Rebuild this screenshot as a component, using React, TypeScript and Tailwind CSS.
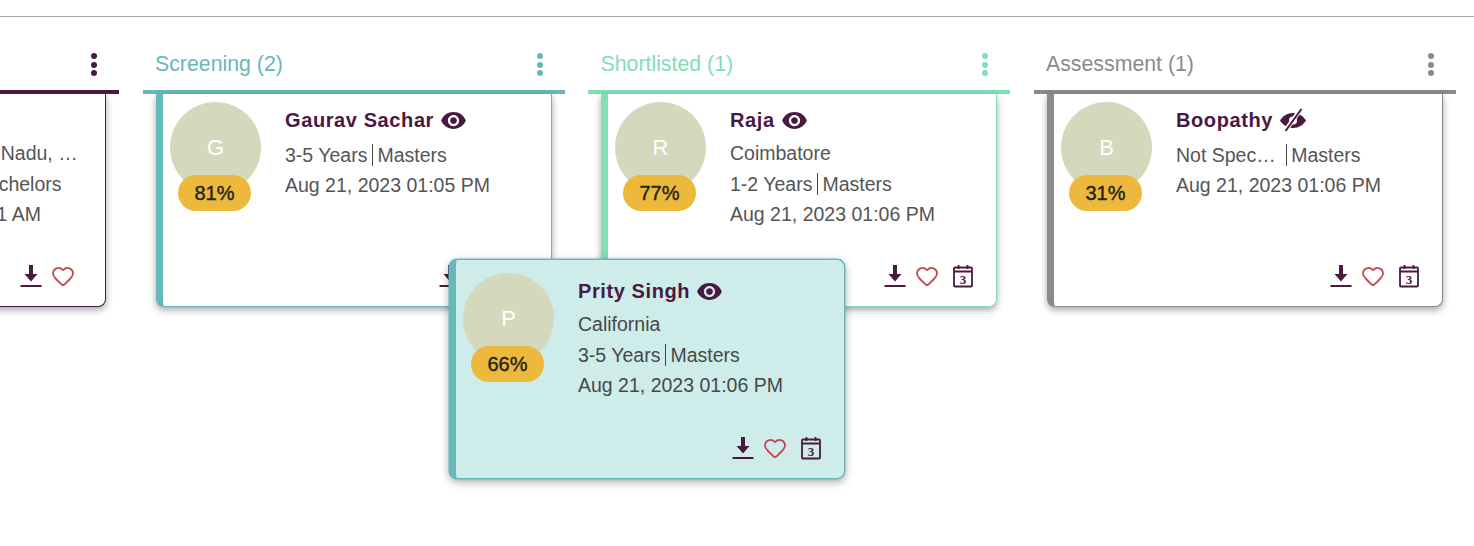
import { Heart } from "lucide-react";
import { MdVisibility } from "react-icons/md";

type Candidate = {
  name: string;
  letter: string;
  score: string;
  rows: string[][];
  seen?: boolean;
  calendar?: boolean;
};

function DownloadIcon() {
  return (
    <svg width="22" height="24" viewBox="0 0 22 24" className="shrink-0 text-[#4a1942]" fill="currentColor">
      <path d="M9 1h4v9h4.500L11 17.500 4.500 10H9z" />
      <rect x="0.500" y="21" width="21" height="2" />
    </svg>
  );
}

function CalendarIcon() {
  return (
    <svg width="22" height="24" viewBox="0 0 22 24" className="shrink-0 text-[#4a1942]" fill="none" stroke="currentColor">
      <rect x="2" y="3.500" width="18" height="19" rx="1" strokeWidth="1.800" />
      <path d="M2 7.500h18M6.500 1v4M15.500 1v4" strokeWidth="1.800" />
      <text x="11" y="19.500" textAnchor="middle" fontSize="13" fontWeight="700" fontFamily="Liberation Serif, serif" fill="currentColor" stroke="none">
        3
      </text>
    </svg>
  );
}

function EyeOffIcon() {
  return (
    <svg width="28" height="24" viewBox="0 0 28 24" className="shrink-0 text-[#4a1942]" fill="currentColor">
      <path d="M14 5c6 0 10.500 3.500 13 7.500-2.500 4-7 7.500-13 7.500S3.500 16.500 1 12.500C3.500 8.500 8 5 14 5z" />
      <circle cx="14" cy="12.500" r="4" fill="white" />
      <path d="M22 1 6 23" stroke="white" strokeWidth="4.500" />
      <path d="M22.500 1 6.500 23" stroke="currentColor" strokeWidth="2" />
    </svg>
  );
}

function CandidateCard({ c, accent, floating }: { c: Candidate; accent: string; floating?: boolean }) {
  return (
    <div
      className={`flex w-[396px] flex-col rounded-[8px] border border-l-[7px] ${accent} ${
        floating
          ? "h-[220px] bg-[#cdecea] shadow-[0_0_0_0.5px_#68b8bb,0_3px_8px_rgba(0,0,0,0.35)]"
          : "h-[213px] rounded-t-none border-t-0 bg-white shadow-[0_3px_7px_rgba(0,0,0,0.35)]"
      }`}
    >
      <div className="flex flex-1">
        <div className={`relative ml-[7px] h-[91px] w-[91px] shrink-0 ${floating ? "mt-[13px]" : "mt-[8px]"}`}>
          <div className="flex h-[91px] w-[91px] items-center justify-center rounded-full bg-[#d4d9bd] text-[22px] text-white">
            {c.letter}
          </div>
          <div className="absolute left-[8px] top-[73px] flex h-[36px] w-[73px] items-center justify-center rounded-[18px] bg-[#ecb93c] text-[20px] text-[#26221a] [-webkit-text-stroke:0.4px_#26221a]">
            {c.score}
          </div>
        </div>
        <div className={`ml-[24px] min-w-0 flex-1 ${floating ? "pt-[15px]" : "pt-[10px]"}`}>
          <div className="flex h-[32px] items-center gap-[6px] text-[20px] font-bold tracking-[0.6px] text-[#4a1942]">
            {c.name}
            {c.seen === false ? <EyeOffIcon /> : <MdVisibility size={27} className="shrink-0" />}
          </div>
          <div className={`${c.rows.length === 2 ? "mt-[3.500px]" : "mt-[2px]"} text-[19.500px] leading-[30.500px] ${floating ? "text-[#484848]" : "text-[#555]"}`}>
            {c.rows.map((r, i) => (
              <div key={i} className="flex items-center whitespace-nowrap">
                {r.length === 1 ? (
                  r[0]
                ) : (
                  <>
                    {r[0]}
                    <span className="mx-[4.500px] h-[22px] w-px bg-[#444]" />
                    {r[1]}
                  </>
                )}
              </div>
            ))}
          </div>
        </div>
      </div>
      <div className={`mb-[18px] flex h-[24px] items-center justify-end gap-[9px] ${c.calendar === false ? "pr-[30px]" : "pr-[22.500px]"}`}>
        <DownloadIcon />
        <Heart size={24} strokeWidth={1.8} className="text-[#c8444f]" />
        {c.calendar !== false && (
          <span className="ml-[4px]">
            <CalendarIcon />
          </span>
        )}
      </div>
    </div>
  );
}

const columns = [
  {
    title: "Applied (1)",
    text: "text-[#4a1942]",
    bar: "bg-[#4a1942]",
    border: "border-[#4a1942]",
    indent: "ml-[12.500px]",
    card: {
      name: "Aravind",
      letter: "A",
      score: "72%",
      rows: [["Coimbatore, Tamil Nadu, …"], ["10 - 15+ Years", "Bachelors"], ["Aug 21, 2023 11:01 AM"]],
      calendar: false,
    },
  },
  {
    title: "Screening (2)",
    text: "text-[#68b8bb]",
    bar: "bg-[#68b8bb]",
    border: "border-[#68b8bb]",
    indent: "ml-[13.500px]",
    card: {
      name: "Gaurav Sachar",
      letter: "G",
      score: "81%",
      rows: [["3-5 Years", "Masters"], ["Aug 21, 2023 01:05 PM"]],
    },
  },
  {
    title: "Shortlisted (1)",
    text: "text-[#7fdfb5]",
    bar: "bg-[#7fdfb5]",
    border: "border-[#7fdfb5]",
    indent: "ml-[13px]",
    card: {
      name: "Raja",
      letter: "R",
      score: "77%",
      rows: [["Coimbatore"], ["1-2 Years", "Masters"], ["Aug 21, 2023 01:06 PM"]],
    },
  },
  {
    title: "Assessment (1)",
    text: "text-[#8a8a8a]",
    bar: "bg-[#8a8a8a]",
    border: "border-[#8a8a8a]",
    indent: "ml-[13.500px]",
    card: {
      name: "Boopathy",
      letter: "B",
      score: "31%",
      rows: [["Not Spec…\u00A0", "Masters"], ["Aug 21, 2023 01:06 PM"]],
      seen: false,
    },
  },
];

const dragged: Candidate = {
  name: "Prity Singh",
  letter: "P",
  score: "66%",
  rows: [["California"], ["3-5 Years", "Masters"], ["Aug 21, 2023 01:06 PM"]],
};

export default function App() {
  return (
    <div className="relative h-[546px] overflow-hidden bg-white pt-4 font-['Liberation_Sans',Arial,sans-serif]">
      <div className="h-px bg-[#aaa6a7]" />
      <div className="-ml-[303px] flex gap-[23.500px] pt-[24px]">
        {columns.map((col) => (
          <div key={col.title} className="w-[422px] shrink-0">
            <div className={`mb-[5px] flex h-[44px] items-center justify-between pl-[12.500px] pr-[22px] pt-[3px] text-[21.300px] ${col.text}`}>
              {col.title}
              <span className="flex flex-col gap-[2.500px]">
                <span className="h-[6px] w-[6px] rounded-full bg-current" />
                <span className="h-[6px] w-[6px] rounded-full bg-current" />
                <span className="h-[6px] w-[6px] rounded-full bg-current" />
              </span>
            </div>
            <div className={`h-[4px] ${col.bar}`} />
            <div className={col.indent}>
              <CandidateCard c={col.card} accent={col.border} />
            </div>
          </div>
        ))}
      </div>
      <div className="absolute left-[449px] top-[259px] z-20">
        <CandidateCard c={dragged} accent="border-[#68b8bb]" floating />
      </div>
    </div>
  );
}
